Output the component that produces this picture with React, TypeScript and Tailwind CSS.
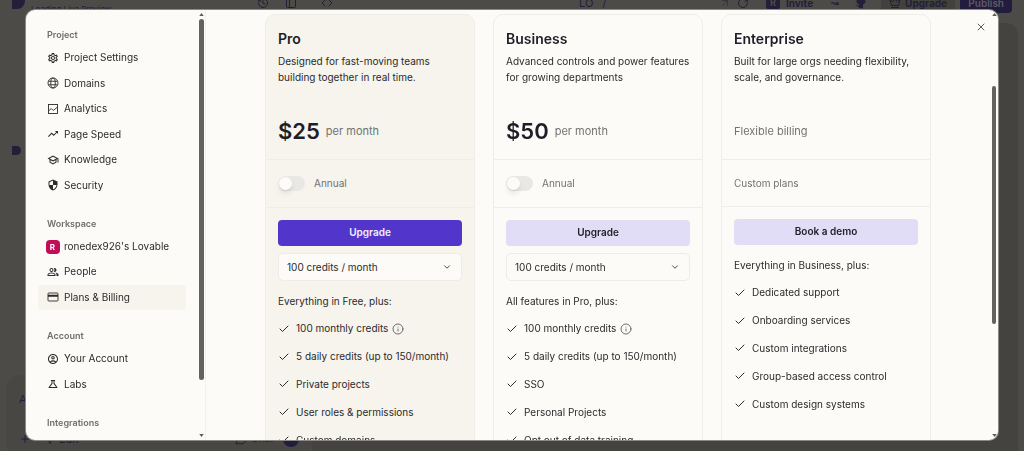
import React from "react";
import {
  MdOutlineSettings,
  MdTrendingUp,
  MdOutlineSchool,
  MdSecurity,
  MdOutlinePeopleAlt,
  MdOutlineAccountCircle,
  MdOutlineScience,
} from "react-icons/md";
import { Check, ChevronDown, Code, Crown, History, Info, PanelLeft, Plus, RotateCw, X, ArrowUpRight, MousePointerClick, MessageCircle, Github } from "lucide-react";

function GlobeIcon() {
  return (
    <svg viewBox="0 0 24 24" className="size-3" fill="none" stroke="currentColor" strokeWidth="1.8" aria-hidden="true">
      <circle cx="12" cy="12" r="10" />
      <ellipse cx="12" cy="12" rx="4.5" ry="10" />
      <path d="M3 8.5h18M3 15.5h18" />
    </svg>
  );
}

function AnalyticsIcon() {
  return (
    <svg viewBox="0 0 24 24" className="size-3" fill="none" stroke="currentColor" strokeWidth="1.8" aria-hidden="true">
      <rect x="3" y="3" width="18" height="18" />
      <path d="M3 16l5.5-5 4 4L21 8" />
    </svg>
  );
}

function CardIcon() {
  return (
    <svg viewBox="0 0 24 24" className="size-3" fill="none" stroke="currentColor" strokeWidth="1.8" aria-hidden="true">
      <rect x="2" y="4" width="20" height="16" rx="1.5" />
      <path d="M2 9.5h20" strokeWidth="3.6" />
    </svg>
  );
}

function WorkspaceBadge() {
  return (
    <span className="flex size-3.5 items-center justify-center rounded-[4px] bg-[#c00d58] text-[8px] font-bold text-white">
      R
    </span>
  );
}

type Item = { label: string; icon: React.ReactNode; active?: boolean };

const sections: { title: string; rows: string; items: Item[] }[] = [
  {
    title: "Project",
    rows: "min-h-[153px]",
    items: [
      { label: "Project Settings", icon: <MdOutlineSettings className="size-3" /> },
      { label: "Domains", icon: <GlobeIcon /> },
      { label: "Analytics", icon: <AnalyticsIcon /> },
      { label: "Page Speed", icon: <MdTrendingUp className="size-3" /> },
      { label: "Knowledge", icon: <MdOutlineSchool className="size-3" /> },
      { label: "Security", icon: <MdSecurity className="size-3" /> },
    ],
  },
  {
    title: "Workspace",
    rows: "min-h-[76px]",
    items: [
      { label: "ronedex926's Lovable", icon: <WorkspaceBadge /> },
      { label: "People", icon: <MdOutlinePeopleAlt className="size-3" /> },
      { label: "Plans & Billing", icon: <CardIcon />, active: true },
    ],
  },
  {
    title: "Account",
    rows: "min-h-[51px]",
    items: [
      { label: "Your Account", icon: <MdOutlineAccountCircle className="size-3" /> },
      { label: "Labs", icon: <MdOutlineScience className="size-3" /> },
    ],
  },
  { title: "Integrations", rows: "", items: [] },
];

function Arrow({ down = false }: { down?: boolean }) {
  return (
    <svg viewBox="0 0 6 4" className="h-[3px] w-[5px] shrink-0" fill="#5c5c5b" aria-hidden="true">
      <path d={down ? "M0 0h6L3 4z" : "M0 4h6L3 0z"} />
    </svg>
  );
}

function Sidebar() {
  return (
    <aside className="flex w-[180px] shrink-0 border-r border-[#f3f1ec] pr-px">
      <nav className="flex-1 overflow-hidden pt-[15px] pr-[13px] pl-3">
        {sections.map((s) => (
          <section key={s.title} className="mb-4">
            <h2 className="h-5 pl-[9px] text-[9px] leading-5 font-semibold text-[#6f6e6c]">{s.title}</h2>
            <ul className={`grid auto-rows-fr ${s.rows}`}>
              {s.items.map((i) => (
                <li key={i.label} className="flex">
                  <a
                    href="#"
                    aria-current={i.active ? "page" : undefined}
                    className={`flex flex-1 items-center gap-1 rounded-[4px] pl-[7px] ${i.active ? "bg-[#f6f4ed]" : ""}`}
                  >
                    <span className="flex w-[15px] shrink-0 items-center justify-center text-[#2b2a2c]">{i.icon}</span>
                    <span className="whitespace-nowrap">{i.label}</span>
                  </a>
                </li>
              ))}
            </ul>
          </section>
        ))}
      </nav>
      <div className="flex w-[5px] flex-col items-center gap-[3px] pt-[3px] pb-[3px]" aria-hidden="true">
        <Arrow />
        <div className="w-full basis-[361px] rounded-full bg-[#626261]" />
        <div className="flex-1" />
        <Arrow down />
      </div>
    </aside>
  );
}

type Plan = {
  name: string;
  text: [string, string];
  price?: string;
  cta: string;
  intro: string;
  features: string[];
  featured?: boolean;
};

const plans: Plan[] = [
  {
    name: "Pro",
    text: ["Designed for fast-moving teams", "building together in real time."],
    price: "$25",
    cta: "Upgrade",
    intro: "Everything in Free, plus:",
    features: [
      "100 monthly credits",
      "5 daily credits (up to 150/month)",
      "Private projects",
      "User roles & permissions",
      "Custom domains",
    ],
    featured: true,
  },
  {
    name: "Business",
    text: ["Advanced controls and power features", "for growing departments"],
    price: "$50",
    cta: "Upgrade",
    intro: "All features in Pro, plus:",
    features: [
      "100 monthly credits",
      "5 daily credits (up to 150/month)",
      "SSO",
      "Personal Projects",
      "Opt out of data training",
    ],
  },
  {
    name: "Enterprise",
    text: ["Built for large orgs needing flexibility,", "scale, and governance."],
    cta: "Book a demo",
    intro: "Everything in Business, plus:",
    features: [
      "Dedicated support",
      "Onboarding services",
      "Custom integrations",
      "Group-based access control",
      "Custom design systems",
    ],
  },
];

function PlanCard({ plan }: { plan: Plan }) {
  return (
    <article
      className={`min-h-[460px] min-w-0 flex-1 rounded-t-[10px] border border-[#efede8] ${plan.featured ? "bg-[#f6f4ed]" : ""}`}
    >
      <div className="border-b border-[#efede8] px-3 pt-3.5 pb-3">
        <h3 className="text-[14px] leading-5 font-semibold text-[#1f1d27]">{plan.name}</h3>
        <p className="mt-1 leading-4 whitespace-nowrap">
          {plan.text[0]}
          <br />
          {plan.text[1]}
        </p>
        <div className="mt-[30px] flex h-8 items-center gap-1.5 text-[11px] text-[#737271]">
          {plan.price ? (
            <>
              <span className="text-[22px] font-semibold text-[#1f1d27]">{plan.price}</span>
              <span>per month</span>
            </>
          ) : (
            <span>Flexible billing</span>
          )}
        </div>
      </div>
      {plan.price ? (
        <label className="flex h-12 items-center gap-[9px] border-b border-[#efede8] px-3 text-[#737271]">
          <input
            type="checkbox"
            role="switch"
            className="h-[15px] w-[27px] appearance-none rounded-full bg-[#e9e8e4] p-px before:block before:size-[13px] before:rounded-full before:bg-[#fcfbf8] before:shadow-md"
          />
          Annual
        </label>
      ) : (
        <div className="flex h-[47px] items-center border-b border-[#efede8] px-3 text-[#737271]">Custom plans</div>
      )}
      <div className="px-3 pt-3">
        <button
          type="button"
          className={`block h-[26px] w-full rounded-[4px] pb-px font-semibold ${plan.featured ? "bg-[#5236cb] text-[#f3f0fb]" : "bg-[#e1ddf7] text-[#22212a]"}`}
        >
          {plan.cta}
        </button>
        {plan.price && (
          <div className="mt-[7px] grid items-center">
            <select
              aria-label={`${plan.name} credits`}
              className="col-start-1 row-start-1 h-7 w-full appearance-none rounded-[5px] border border-[#eeece7] bg-[#fcfbf8] px-2"
            >
              <option>100 credits / month</option>
            </select>
            <ChevronDown className="pointer-events-none col-start-1 row-start-1 mr-2.5 size-2.5 justify-self-end" />
          </div>
        )}
        <p className="mt-3 leading-4">{plan.intro}</p>
        <ul className="mt-1.5 grid min-h-[139px] auto-rows-fr">
          {plan.features.map((f, n) => (
            <li key={f} className="flex items-center gap-1.5 whitespace-nowrap">
              <Check className="size-3 shrink-0" strokeWidth={2} />
              {f}
              {plan.price && n === 0 && <Info className="-ml-0.5 size-3 text-[#5f5e5c]" strokeWidth={1.8} />}
            </li>
          ))}
        </ul>
      </div>
    </article>
  );
}

function Backdrop() {
  return (
    <div className="flex h-screen flex-col overflow-hidden bg-[#4c4b48] text-[#231f38]" aria-hidden="true">
      <header className="-mt-[17px] flex h-10 shrink-0 items-center pr-3 pl-3">
        <span className="h-3 w-[13px] rounded-tr rounded-br-lg bg-[#231f38]" />
        <span className="mt-3 ml-1.5 w-[226px] text-[8px]">Loading Live Preview</span>
        <History className="size-3" />
        <PanelLeft className="ml-4 size-3" />
        <Code className="ml-6 size-3" />
        <span className="ml-[246px] w-[140px] text-[11px]">LO&nbsp;&nbsp; /</span>
        <ArrowUpRight className="size-3 opacity-50" />
        <RotateCw className="ml-1.5 size-3" />
        <span className="ml-[17px] flex size-3.5 items-center justify-center rounded bg-[#231f38] text-[9px] font-bold text-[#4c4b48]">R</span>
        <span className="ml-1.5 text-[10px] font-bold">Invite</span>
        <span className="ml-[18px] text-[9px] font-bold">↝</span>
        <Github className="ml-4 size-3" fill="currentColor" />
        <span className="ml-3.5 flex h-6 items-center gap-1 rounded bg-[#42413e] px-2 text-[10px] font-bold">
          <Crown className="size-3" />
          Upgrade
        </span>
        <span className="ml-auto flex h-5 items-center rounded bg-[#231d3d] px-2 text-[10px] font-semibold text-[#5d5a63]">Publish</span>
      </header>
      <div className="flex min-h-0 flex-1">
        <div className="flex w-[312px] shrink-0 flex-col justify-between">
          <span className="mt-[123px] ml-3 h-[9px] w-[9px] rounded-tr-md rounded-br-md bg-[#231f38]" />
          <div className="-mb-2 ml-1.5 flex h-[84px] flex-col justify-between rounded-2xl bg-[#484744] px-[13px] pt-4 pb-3 text-[11px]">
            <span>Ask Lovable...</span>
            <div className="flex items-center">
              <Plus className="size-3" />
              <MousePointerClick className="ml-3 size-3" />
              <span className="ml-1">Edit</span>
              <MessageCircle className="ml-auto size-3" />
              <span className="ml-1 w-[32px] text-[10px]">Chat</span>
              <span className="size-4 rounded-full bg-[#231d3d]" />
            </div>
          </div>
        </div>
        <div className="mr-1.5 flex-1 rounded-t-xl bg-[#444340]" />
      </div>
    </div>
  );
}

export default function App() {
  return (
    <div className="font-['Inter',sans-serif]">
      <Backdrop />
      <div className="fixed inset-0 flex px-[26px] pt-2.5 pb-[11px]">
        <div
          role="dialog"
          aria-label="Plans & Billing"
          className="flex min-w-0 flex-1 overflow-hidden rounded-[9px] bg-[#fcfbf8] text-[10px] text-[#2b2a2c] ring-1 ring-[#8b8a87]"
        >
          <Sidebar />
          <main className="flex min-w-0 flex-1">
            <div className="flex min-w-0 flex-1 gap-[18px] pt-1 pl-[59px]">
              {plans.map((p) => (
                <PlanCard key={p.name} plan={p} />
              ))}
            </div>
            <div className="flex w-[61px] justify-end pt-2.5 pr-1">
              <button type="button" aria-label="Close" className="flex size-3.5 items-center justify-center text-[#5c5b5a]">
                <X className="size-3" />
              </button>
            </div>
            <div className="flex w-1.5 flex-col items-center py-[3px] pr-0.5" aria-hidden="true">
              <Arrow />
              <div className="basis-[70px]" />
              <div className="w-full basis-[238px] rounded-full bg-[#626261]" />
              <div className="flex-1" />
              <Arrow down />
            </div>
          </main>
        </div>
      </div>
    </div>
  );
}
